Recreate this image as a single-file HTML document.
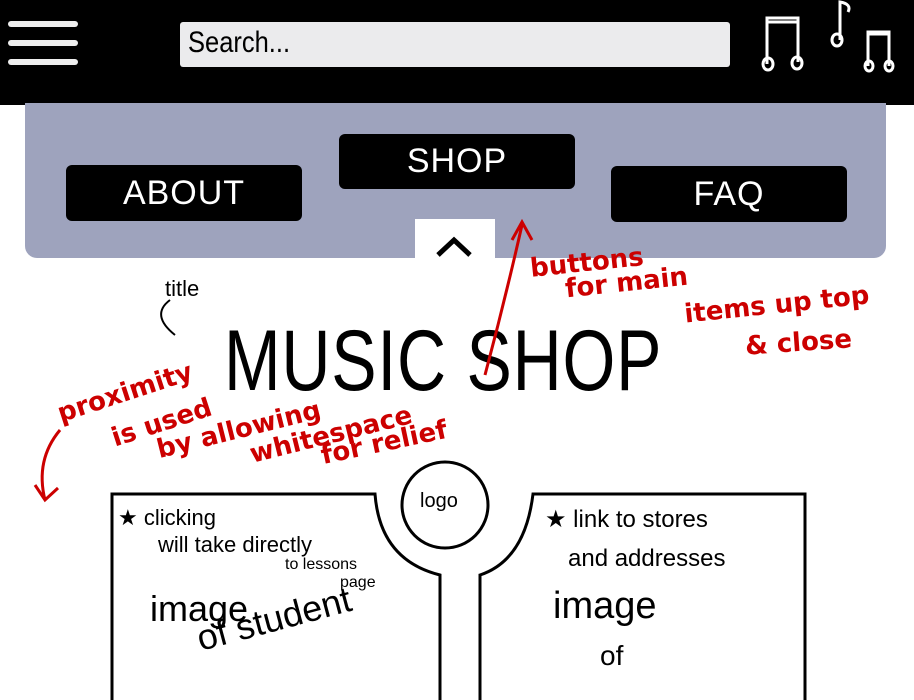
<!DOCTYPE html>
<html><head><meta charset="utf-8"><style>
body{margin:0;width:914px;height:700px;overflow:hidden;background:#fff;position:relative;font-family:"Liberation Sans",sans-serif}
.a{position:absolute}
.btn{position:absolute;background:#000;color:#fff;border-radius:6px;font-size:34px;display:flex;align-items:center;justify-content:center;letter-spacing:1px;font-family:"Liberation Sans Narrow","Liberation Sans",sans-serif}
.r{position:absolute;color:#c00;font-family:"DejaVu Sans",sans-serif;font-weight:bold;font-size:26px;white-space:nowrap}
.k{position:absolute;color:#000;font-size:24px;white-space:nowrap}
</style></head><body>
<div class="a" style="left:0;top:0;width:914px;height:105px;background:#000"></div>
<div class="a" style="left:8px;top:21px;width:70px;height:6px;background:#eee;border-radius:3px"></div>
<div class="a" style="left:8px;top:40px;width:70px;height:6px;background:#eee;border-radius:3px"></div>
<div class="a" style="left:8px;top:59px;width:70px;height:6px;background:#eee;border-radius:3px"></div>
<div class="a" style="left:180px;top:22px;width:550px;height:45px;background:#ebebed;border-radius:3px"></div>
<div class="a" style="left:188px;top:26px;font-size:30px;color:#000;transform:scaleX(0.85);transform-origin:left">Search...</div>
<svg class="a" style="left:0;top:0" width="914" height="105">
<g stroke="#fff" stroke-width="3" fill="none">
<path d="M767 64 V18 H798 V62 M767 18 H798 M767 22 H798"/>
<ellipse cx="768" cy="64" rx="5" ry="6"/><ellipse cx="797" cy="63" rx="5" ry="6"/>
<path d="M840 40 V2 Q852 4 848 12"/><ellipse cx="837" cy="40" rx="5" ry="6"/>
<path d="M868 66 V32 H889 V66 M868 34 H889"/>
<ellipse cx="869" cy="66" rx="4" ry="5"/><ellipse cx="889" cy="66" rx="4" ry="5"/>
</g></svg>
<div class="a" style="left:25px;top:103px;width:861px;height:155px;background:#9ea3bd;border-radius:0 0 12px 12px"></div>
<div class="a" style="left:415px;top:219px;width:80px;height:45px;background:#fff"></div>
<svg class="a" style="left:430px;top:230px" width="50" height="30"><path d="M8 25 L24 10 L40 25" stroke="#000" stroke-width="5" fill="none"/></svg>
<div class="btn" style="left:66px;top:165px;width:236px;height:56px">ABOUT</div>
<div class="btn" style="left:339px;top:134px;width:236px;height:55px">SHOP</div>
<div class="btn" style="left:611px;top:166px;width:236px;height:56px">FAQ</div>
<div class="a" style="left:224px;top:312px;font-size:86px;font-weight:normal;letter-spacing:1px;transform:scaleX(0.79);transform-origin:left;color:#000">MUSIC SHOP</div>
<div class="k" style="left:165px;top:276px;font-size:22px">title</div>
<svg class="a" style="left:0;top:0" width="914" height="700">
<path d="M170 300 Q150 315 175 335" stroke="#000" stroke-width="2" fill="none"/>
<path d="M485 375 Q505 300 522 225 M512 240 L522 222 L532 240" stroke="#c00" stroke-width="3" fill="none"/>
<path d="M60 430 Q35 460 45 500 M35 485 L45 500 L58 488" stroke="#c00" stroke-width="3" fill="none"/>
<g stroke="#000" stroke-width="3" fill="none">
<path d="M112 700 V494 H375 Q380 560 440 575 V700"/>
<path d="M805 700 V494 H533 Q525 560 480 575 V700"/>
<circle cx="445" cy="505" r="43"/>
</g>
</svg>
<div class="r" style="left:530px;top:248px;transform:rotate(-6deg)">buttons</div>
<div class="r" style="left:565px;top:268px;transform:rotate(-6deg)">for main</div>
<div class="r" style="left:684px;top:290px;transform:rotate(-6deg)">items up top</div>
<div class="r" style="left:745px;top:328px;transform:rotate(-4deg)">&amp; close</div>
<div class="r" style="left:55px;top:378px;transform:rotate(-18deg)">proximity</div>
<div class="r" style="left:110px;top:408px;transform:rotate(-18deg)">is used</div>
<div class="r" style="left:155px;top:415px;transform:rotate(-14deg)">by allowing</div>
<div class="r" style="left:248px;top:420px;transform:rotate(-14deg)">whitespace</div>
<div class="r" style="left:320px;top:428px;transform:rotate(-12deg)">for relief</div>
<div class="k" style="left:420px;top:490px;font-size:20px">logo</div>
<div class="k" style="left:118px;top:505px;font-size:22px">★ clicking</div>
<div class="k" style="left:158px;top:532px;font-size:22px">will take directly</div>
<div class="k" style="left:285px;top:556px;font-size:16px">to lessons</div>
<div class="k" style="left:340px;top:574px;font-size:16px">page</div>
<div class="k" style="left:150px;top:588px;font-size:36px">image</div>
<div class="k" style="left:195px;top:598px;font-size:36px;transform:rotate(-15deg)">of student</div>
<div class="k" style="left:545px;top:505px;font-size:24px">★ link to stores</div>
<div class="k" style="left:568px;top:545px;font-size:24px">and addresses</div>
<div class="k" style="left:553px;top:585px;font-size:38px">image</div>
<div class="k" style="left:600px;top:640px;font-size:28px">of</div>
</body></html>
